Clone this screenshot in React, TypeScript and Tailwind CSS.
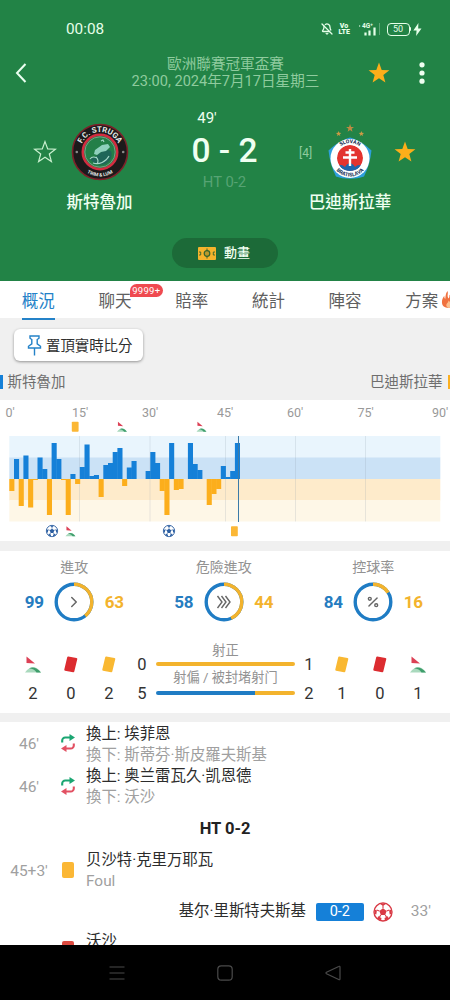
import type { ReactNode } from 'react';
import { BellOff, ChevronRight, Percent } from 'lucide-react';

const BLUE = '#1580d8';
const AMBER = '#fcae1c';

const TABS = [
  { label: '概況', active: true },
  { label: '聊天', badge: '9999+' },
  { label: '賠率' },
  { label: '統計' },
  { label: '陣容' },
  { label: '方案', hot: true },
];

// one value per minute, positive = home pressure, negative = away pressure
const MOMENTUM = [
  -12, 20, -27, 23.5, -28.5, -1, 21.5, 10, -36, 36, 20, -1, -36, 5, -5, 12, 34.5, 3, 4, -18, 14, 16, 27, 31, -7, 11.5,
  18, 0, 0, 8, 27, 16, -12, -36, 36, -11, -10, 0, 36, 15, 9, 0, -26, -15, -10, 13, 2, 8, 36,
];

const STAR = 'M12 1.6l2.7 7.3 7.7.3-6.1 4.8 2.1 7.5-6.4-4.3-6.4 4.3 2.1-7.5-6.1-4.8 7.7-.3z';

const Star = ({ filled = false, className = '' }: { filled?: boolean; className?: string }) => (
  <svg viewBox="0 0 24 24" className={className}>
    <path d={STAR} fill={filled ? '#fcae1a' : 'none'} stroke={filled ? 'none' : '#c9f0cf'} strokeWidth="1.2" />
  </svg>
);

const Ball = ({ color = '#2a5da0' }: { color?: string }) => (
  <g>
    <circle cx="10" cy="10" r="9" fill="#fff" stroke={color} strokeWidth="1.4" />
    <path d="M10 6.3l3.6 2.6-1.4 4.2H7.8L6.4 8.9z" fill={color} />
    <path d="M10 6.3V3.5M13.6 8.9l2.8-.9M12.2 13.1l1.7 2.4M7.8 13.1l-1.7 2.4M6.4 8.9L3.6 8" stroke={color} strokeWidth="1.1" />
    <path d="M6.8 1.8L10 4l3.2-2.2zM18.7 7.2l-2.6 1.2.6 4.2 1.5-.7zM15.8 16.8l-.9-2.6-3.4 1.9.5 2.5zM4.2 16.8l.9-2.6 3.4 1.9-.5 2.5zM1.3 7.2l2.6 1.2-.6 4.2-1.5-.7z" fill={color} />
  </g>
);

const Corner = () => (
  <g>
    <path d="M1.5.5L10 7.5 1.5 7z" fill="#dc4055" />
    <path d="M0 16.5C3 12.5 6 11 9 11.3s5 2.5 7 5.2z" fill="#a9d9bd" />
    <path d="M4 12.3c4-2 8-.5 12 4.2h-4.5c-1.5-2.5-4-4-7.5-4.2z" fill="#3f9e6c" />
  </g>
);

const StatusBar = () => (
  <div className="flex h-[58px] items-center pl-[66px] pr-[28px] text-[#e6ffe9]">
    <span className="flex-1 text-[15.3px] leading-5">00:08</span>
    <BellOff className="h-3 w-3" strokeWidth={2.6} />
    <span className="ml-[6px] flex w-[11px] flex-col text-center text-[7px] font-black leading-[6.5px]">
      <span>Vo</span>
      <span>LTE</span>
    </span>
    <svg viewBox="0 0 22 14" className="ml-[9px] h-[14px] w-[22px]">
      <rect x="0" y="3" width="1.2" height="2" fill="#8fc7a0" />
      <text x="3" y="5.5" fontSize="6.5" fontWeight="700" fill="currentColor">4G⁺</text>
      <path d="M6.5 13.5v-3M10.5 13.5v-5M15.5 13.5V5.5" stroke="currentColor" strokeWidth="2.2" />
      <path d="M20.5 1v12" stroke="#5da677" strokeWidth="1" />
    </svg>
    <div className="ml-[6px] flex h-[13px] w-[23px] items-center justify-center rounded-[4px] border-[1.5px] border-current text-[9px] leading-none">
      50
    </div>
    <span className="h-1 w-[1.5px] rounded-r bg-current" />
    <svg viewBox="0 0 9 14" className="ml-[2px] h-[13px] w-[9px]">
      <path d="M5.5 0L0 8h3.5L3 14l5.8-8.2H5.2z" fill="currentColor" />
    </svg>
  </div>
);

const HomeCrest = () => (
  <svg viewBox="0 0 58 58" className="h-[58px] w-[58px]">
    <defs>
      <path id="home-top" d="M9 29a20 20 0 0 1 40 0" />
      <path id="home-bottom" d="M4.5 29a24.5 24.5 0 0 0 49 0" />
    </defs>
    <circle cx="29" cy="29" r="27.5" fill="#1c1a1b" stroke="#7d2029" strokeWidth="1.6" />
    <circle cx="29" cy="29" r="17.2" fill="#237f48" stroke="#d32c40" strokeWidth="2.6" />
    <circle cx="29" cy="29" r="15.2" fill="none" stroke="#8aa894" strokeWidth="0.8" />
    <path d="M18 34c4 2 8-1 11-4s7-4 11-2c2 5-1 11-6 13-7 2-13-1-16-7z" fill="#1f6659" />
    <path d="M24 27l7-5 6-1 2 3-4 4-5 1-4 3-3-1z" fill="#8fd0bd" />
    <path d="M19 36c2-3 5-2 7-1M22 40c6 2 13-1 16-7M26 41c2-3 1-5-1-7M30 18l2-1 1 2" stroke="#a5d8c8" strokeWidth="1.1" fill="none" />
    <text fontSize="7.8" fontWeight="700" fill="#e8ece9" textAnchor="middle">
      <textPath href="#home-top" startOffset="50%">F.C. STRUGA</textPath>
    </text>
    <text fontSize="4.8" fontWeight="700" fill="#e8ece9" textAnchor="middle">
      <textPath href="#home-bottom" startOffset="50%">TRIM &amp; LUM</textPath>
    </text>
    <circle cx="5.8" cy="29" r="1.3" fill="#8b8b8b" />
    <circle cx="52.2" cy="29" r="1.3" fill="#8b8b8b" />
  </svg>
);

const AwayCrest = () => (
  <svg viewBox="0 0 46 58" className="h-[58px] w-[46px]">
    <defs>
      <path id="away-top" d="M8 35a15 15 0 0 1 30 0" />
      <path id="away-bottom" d="M4.5 35a18.5 18.5 0 0 0 37 0" />
      <clipPath id="away-inner">
        <circle cx="23" cy="35" r="13" />
      </clipPath>
    </defs>
    <path d={STAR} transform="translate(18.5 .5) scale(.38)" fill="#bd8a43" />
    <path d={STAR} transform="translate(8.5 7.5) scale(.26)" fill="#cb9a45" />
    <path d={STAR} transform="translate(31.3 7.5) scale(.26)" fill="#cb9a45" />
    <path d="M23 14.5c7 2 14 6 21.5 13-1 9-3 17-7.5 26-9 3-19 3-28 0-4.500-9-6.500-17-7.500-26C9 20.500 16 16.500 23 14.500z" fill="#2f9fdc" />
    <circle cx="23" cy="35.5" r="19.5" fill="#fff" />
    <g clipPath="url(#away-inner)">
      <circle cx="23" cy="35" r="13" fill="#e3332f" />
      <path d="M8 46c4-5 7-5 10-2 3-5 7-5 10 0 3-3 6-3 10 2v8H8z" fill="#1d66ad" />
    </g>
    <path d="M23 26v17M18.5 29.5h9M16 34.5h14" stroke="#fff" strokeWidth="2.4" />
    <text fontSize="5.2" fontWeight="800" fill="#1c3558" textAnchor="middle">
      <textPath href="#away-top" startOffset="50%">SLOVAN</textPath>
    </text>
    <text fontSize="5.2" fontWeight="800" fill="#1c3558" textAnchor="middle">
      <textPath href="#away-bottom" startOffset="50%">BRATISLAVA</textPath>
    </text>
  </svg>
);

const MatchHeader = () => (
  <header className="h-[281px] shrink-0 bg-[#228346]">
    <StatusBar />
    <div className="flex h-[30px] items-center pl-[15px] pr-[25px]">
      <svg viewBox="0 0 12 20" className="h-5 w-3 shrink-0" fill="none" stroke="#eafff0" strokeWidth="2">
        <path d="M10.5 1L2 10l8.5 9" />
      </svg>
      <div className="flex flex-1 flex-col items-center pl-[63px] text-[14.6px] leading-[17px] text-[#8fcb9e]">
        <span>歐洲聯賽冠軍盃賽</span>
        <span className="whitespace-nowrap">23:00, 2024年7月17日星期三</span>
      </div>
      <Star filled className="ml-[6px] h-6 w-6 shrink-0" />
      <svg viewBox="0 0 6 22" className="ml-[28px] h-[22px] w-[6px] shrink-0 fill-[#effff1]">
        <circle cx="3" cy="2.8" r="2.6" />
        <circle cx="3" cy="11" r="2.6" />
        <circle cx="3" cy="19.2" r="2.6" />
      </svg>
    </div>
    <div className="flex h-[126px] pl-[33px] pt-[20px]">
      <Star className="mt-[32px] h-6 w-6 shrink-0" />
      <div className="flex w-[85px] flex-col items-center pt-[15px] text-[16.5px] font-medium text-[#effff1]">
        <HomeCrest />
        <span className="mt-[12px] leading-5">斯特魯加</span>
      </div>
      <div className="flex w-[157px] flex-col items-center pl-2 text-[#effff1]">
        <span className="mr-[35px] text-[15px] leading-5">49'</span>
        <span className="mt-[3px] whitespace-nowrap text-[33.5px] font-medium leading-10">0 - 2</span>
        <span className="mt-[1px] text-[14.8px] leading-5 text-[#57a374]">HT 0-2</span>
      </div>
      <span className="mt-[35px] w-[14px] text-[12px] leading-5 text-[#8fcb9e]">[4]</span>
      <div className="-ml-[6px] flex w-[86px] flex-col items-center pt-[15px] text-[16.5px] font-medium text-[#effff1]">
        <AwayCrest />
        <span className="mt-[12px] whitespace-nowrap leading-5">巴迪斯拉華</span>
      </div>
      <Star filled className="mt-[32px] h-6 w-6 shrink-0" />
    </div>
    <button className="ml-[172px] mt-[24px] flex h-[30px] w-[106px] items-center justify-center gap-2 rounded-full bg-[#1c6a38] pr-[2px] text-[13px] font-medium text-[#effff1]">
      <svg viewBox="0 0 18 13" className="h-[13px] w-[18px]">
        <rect width="18" height="13" rx="1" fill="#f5b32c" />
        <path d="M9 1.500v10" stroke="#33642e" strokeWidth="1" />
        <path d="M1 5h1.700v3H1M17 5h-1.700v3H17" stroke="#33642e" strokeWidth="0.9" fill="none" />
        <circle cx="9" cy="6.5" r="2.8" fill="#b99a2c" stroke="#33642e" strokeWidth="1.2" />
      </svg>
      動畫
    </button>
  </header>
);

const TabBar = () => (
  <nav className="relative z-10 flex h-[37px] shrink-0 bg-white text-[16.5px] text-[#606060]">
    {TABS.map((tab) => (
      <div key={tab.label} className="relative flex w-[76.7px] shrink-0 justify-center pt-[9px] leading-6">
        <span className={tab.active ? 'h-[30px] border-b-2 border-[#2482c8] text-[#2482c8]' : ''}>{tab.label}</span>
        {tab.badge && (
          <span className="absolute left-[53px] top-[3px] rounded-full rounded-bl-none bg-[#ef4a50] px-[2.5px] text-[9.5px] leading-[13px] tracking-[0.3px] text-white">
            {tab.badge}
          </span>
        )}
        {tab.hot && (
          <svg viewBox="0 0 16 18" className="absolute left-[58px] top-[10px] h-[17px] w-[15px]">
            <path d="M7 0c1 3-1 5 1 8 1-1 1-2 1-4 4 3 6 6 5 9s-3 5-6 5c-4 0-7-2-7-6 0-3 1-5 2.500-7 0 2 .5 3 1 3.500C5 6 4.500 3 7 0z" fill="#f0713f" />
            <path d="M8 18c-2.500-1-3-3-1.500-5 1-1 1.500-2 1.500-3 2 2 4 4 3 6s-2 2-3 2z" fill="#fbc08e" />
          </svg>
        )}
      </div>
    ))}
  </nav>
);

const Teams = () => (
  <div className="h-[82px] shrink-0 bg-[#f0f0f0] pt-[11px]">
    <button className="ml-[14px] flex h-[32px] w-[129px] items-center gap-1 rounded-[6px] bg-white pl-[13px] text-[14.4px] text-[#2f2f2f] shadow-[0_1px_3px_rgba(0,0,0,0.4)]">
      <svg viewBox="0 0 15 21" className="h-[21px] w-[15px] shrink-0" fill="none" stroke="#2482c8" strokeWidth="1.4">
        <path d="M3 1h9v2.200l-1.800 1.300v4.300l3.300 2.500v1.700h-12v-1.700l3.300-2.500V4.500L3 3.200zM7.500 13v7.500" />
      </svg>
      <span className="whitespace-nowrap pt-[3px]">置頂實時比分</span>
    </button>
    <div className="mt-[12px] flex h-5 items-center justify-between text-[14.5px] leading-5 text-[#6e6e6e]">
      <span className="flex items-center gap-[5px]">
        <i className="mb-[2px] h-[14px] w-[2.5px] bg-[#1580d8]" />
        斯特魯加
      </span>
      <span className="flex items-center gap-[5px]">
        巴迪斯拉華
        <i className="mb-[2px] h-[14px] w-[2.5px] bg-[#fbb022]" />
      </span>
    </div>
  </div>
);

const Momentum = () => (
  <svg viewBox="0 0 450 141" className="h-[141px] w-[450px] shrink-0 bg-white">
    {[
      [10, "0'"],
      [80, "15'"],
      [150, "30'"],
      [225, "45'"],
      [295, "60'"],
      [365.5, "75'"],
      [440, "90'"],
    ].map(([x, label]) => (
      <text key={label} x={x} y="17" textAnchor="middle" fontSize="12.5" fill="#999">
        {label}
      </text>
    ))}
    <rect x="9.3" y="36" width="431" height="22" fill="#e9f5fd" />
    <rect x="9.3" y="57.5" width="431" height="21.5" fill="#cbe2f6" />
    <rect x="9.3" y="79" width="431" height="21.5" fill="#feebcb" />
    <rect x="9.3" y="100" width="431" height="21.5" fill="#fef7e7" />
    {[79.5, 150, 225.5, 295.5, 365.5].map((x) => (
      <path key={x} d={`M${x} 36v85.5`} stroke="#8d9aa8" strokeOpacity="0.25" strokeWidth="0.8" />
    ))}
    {MOMENTUM.map((v, i) => (
      <rect key={i} x={9.3 + i * 4.7} y={v > 0 ? 79 - v : 79} width="5.1" height={Math.abs(v)} fill={v > 0 ? BLUE : AMBER} />
    ))}
    <path d="M238.5 36v86" stroke="#3c7ba8" strokeWidth="1" />
    <rect x="71.8" y="21.8" width="6.8" height="10" rx=".8" fill="#fbb735" />
    <rect x="231" y="126.3" width="6.8" height="10" rx=".8" fill="#fbb735" />
    {[
      [117, 21.5],
      [196.5, 21.5],
      [65.5, 126],
    ].map(([x, y]) => (
      <g key={x} transform={`translate(${x} ${y}) scale(.62)`}>
        <Corner />
      </g>
    ))}
    {[45.7, 162.7].map((x) => (
      <g key={x} transform={`translate(${x} 124.7) scale(.63)`}>
        <Ball />
      </g>
    ))}
  </svg>
);

const Donut = ({ label, home, away, icon }: { label: string; home: number; away: number; icon: ReactNode }) => {
  const circumference = 2 * Math.PI * 17.8;
  const share = (away / (home + away)) * circumference;
  return (
    <div className="flex w-[149.5px] flex-col items-center">
      <span className="text-[14px] leading-5 text-[#929292]">{label}</span>
      <div className="mt-[5px] flex items-center text-[17px] font-bold tracking-[-0.3px]">
        <span className="w-10 pt-[1px] text-center text-[#257cc0]">{home}</span>
        <div className="relative flex h-10 w-10 items-center justify-center text-[#666]">
          <svg viewBox="0 0 40 40" className="absolute inset-0 -rotate-90" fill="none" strokeWidth="3.4">
            <circle cx="20" cy="20" r="17.8" stroke="#1f7cc4" />
            <circle cx="20" cy="20" r="17.8" stroke="#f3b32d" strokeDasharray={`${share} ${circumference}`} />
          </svg>
          {icon}
        </div>
        <span className="w-10 pt-[1px] text-center text-[#f3b32d]">{away}</span>
      </div>
    </div>
  );
};

const Card = ({ color }: { color: string }) => (
  <svg viewBox="0 0 14 17" className="h-[17px] w-[14px]">
    <path d="M4.3.6l8.2 1.300a1 1 0 0 1 .8 1.200l-3 12.500a1 1 0 0 1-1.200.7L1 14.700a1 1 0 0 1-.7-1.200L3.200 1.300A1 1 0 0 1 4.300.6z" fill={color} />
  </svg>
);

const StatIcon = ({ value, children }: { value: number; children: ReactNode }) => (
  <div className="flex w-[38px] flex-col items-center">
    <div className="flex h-[17px] items-center">{children}</div>
    <span className="mt-[11px] leading-5">{value}</span>
  </div>
);

const CornerStat = () => (
  <svg viewBox="0 0 16 17" className="h-[17px] w-4">
    <Corner />
  </svg>
);

const Stats = () => (
  <section className="h-[162px] shrink-0 bg-white pt-[6px]">
    <div className="-ml-[0.5px] flex">
      <Donut label="進攻" home={99} away={63} icon={<ChevronRight className="h-[18px] w-[18px]" strokeWidth={2} />} />
      <Donut
        label="危險進攻"
        home={58}
        away={44}
        icon={
          <svg viewBox="0 0 16 14" className="h-[14px] w-4" fill="none" stroke="currentColor" strokeWidth="1.4">
            <path d="M1.500 1L6 7l-4.500 6M5.500 1L10 7l-4.500 6M9.500 1L14 7l-4.500 6" />
          </svg>
        }
      />
      <Donut label="控球率" home={84} away={16} icon={<Percent className="h-[14px] w-[14px]" strokeWidth={2.4} />} />
    </div>
    <div className="flex pl-[14px] pt-[19px] text-[16.5px] text-[#333]">
      <div className="flex pt-[15px]">
        <StatIcon value={2}><CornerStat /></StatIcon>
        <StatIcon value={0}><Card color="#dc2c30" /></StatIcon>
        <StatIcon value={2}><Card color="#f9b832" /></StatIcon>
      </div>
      <div className="flex w-7 flex-col items-center gap-[9px] pt-[14px] leading-5">
        <span>0</span>
        <span>5</span>
      </div>
      <div className="flex w-[139px] flex-col items-center text-[13.2px] leading-5 text-[#929292]">
        <span className="h-[21px]">射正</span>
        <i className="h-1 w-full rounded-full bg-[#f3b32d]" />
        <span className="mt-[2px] h-[23px] whitespace-nowrap">射偏 / 被封堵射门</span>
        <div className="flex h-1 w-full overflow-hidden rounded-full">
          <i className="w-[71.4%] bg-[#1f7cc4]" />
          <i className="flex-1 bg-[#f3b32d]" />
        </div>
      </div>
      <div className="flex w-7 flex-col items-center gap-[9px] pt-[14px] leading-5">
        <span>1</span>
        <span>2</span>
      </div>
      <div className="flex pt-[15px]">
        <StatIcon value={1}><Card color="#f9b832" /></StatIcon>
        <StatIcon value={0}><Card color="#dc2c30" /></StatIcon>
        <StatIcon value={1}><CornerStat /></StatIcon>
      </div>
    </div>
  </section>
);

const SwapIcon = () => (
  <svg viewBox="0 0 16 20" className="mb-[3px] h-5 w-4" fill="none" strokeWidth="2.1">
    <path d="M2.200 9.500V7.500a3 3 0 0 1 3-3H10" stroke="#1ba672" />
    <path d="M9.500 1l5.500 3.500-5.500 3.500z" fill="#1ba672" />
    <path d="M13.800 10.500v2a3 3 0 0 1-3 3H6" stroke="#e25062" />
    <path d="M6.500 12L1 15.500 6.500 19z" fill="#e25062" />
  </svg>
);

const EventRow = ({ time, icon, title, note }: { time: string; icon: ReactNode; title: string; note?: string }) => (
  <div className="flex items-center">
    <span className="w-[58px] shrink-0 text-center text-[15.5px] text-[#a0a0a0]">{time}</span>
    <span className="flex w-[19px] shrink-0 justify-center">{icon}</span>
    <div className="ml-[9px] flex flex-col whitespace-nowrap text-[15.4px] leading-[21.3px]">
      <span className="text-[#2c2c2c]">{title}</span>
      {note && <span className="text-[#a0a0a0]">{note}</span>}
    </div>
  </div>
);

const Events = () => (
  <section className="h-[223px] shrink-0 overflow-hidden bg-white pt-[1.5px]">
    <EventRow time="46'" icon={<SwapIcon />} title="換上: 埃菲恩" note="換下: 斯蒂芬·斯皮羅夫斯基" />
    <EventRow time="46'" icon={<SwapIcon />} title="換上: 奥兰雷瓦久·凯恩德" note="換下: 沃沙" />
    <p className="flex h-[41.5px] items-center justify-center text-[16.5px] font-bold text-[#222]">HT 0-2</p>
    <EventRow
      time="45+3'"
      icon={<i className="mb-[2px] h-4 w-3 rounded-[2px] bg-[#fbb735]" />}
      title="贝沙特·克里万耶瓦"
      note="Foul"
    />
    <div className="flex h-[38px] items-center justify-end pr-[19px] text-[15.4px] text-[#2c2c2c]">
      <span>基尔·里斯特夫斯基</span>
      <span className="ml-[10px] flex h-[18px] w-12 items-center justify-center rounded-[2px] bg-[#1580d8] text-[14.5px] text-white">
        0-2
      </span>
      <svg viewBox="0 0 20 20" className="ml-[9px] h-5 w-5">
        <Ball color="#d93a45" />
      </svg>
      <span className="ml-[18px] text-[15.5px] text-[#a0a0a0]">33'</span>
    </div>
    <EventRow time="" icon={<i className="-mb-[20px] h-4 w-3 rounded-[2px] bg-[#dc4a40]" />} title="沃沙" />
  </section>
);

const SystemNav = () => (
  <footer className="flex h-[55px] shrink-0 items-center justify-between bg-black px-[109px] text-[#4a4a4a]">
    <svg viewBox="0 0 16 16" className="h-4 w-4" stroke="currentColor" strokeWidth="1.2">
      <path d="M.5 2h15M.5 8h15M.5 14h15" />
    </svg>
    <svg viewBox="0 0 16 16" className="h-4 w-4" fill="none" stroke="currentColor" strokeWidth="1.2">
      <rect x=".8" y=".8" width="14.4" height="14.4" rx="3.5" />
    </svg>
    <svg viewBox="0 0 16 16" className="h-4 w-4" fill="none" stroke="currentColor" strokeWidth="1.2">
      <path d="M15 2.200v11.600q0 1.400-1.300.7L1.500 8.700q-1-.7 0-1.400L13.700 1.500q1.300-.7 1.300.7z" />
    </svg>
  </footer>
);

export default function App() {
  return (
    <div className="flex h-[1000px] w-[450px] flex-col overflow-hidden bg-[#f0f0f0] font-[Roboto,'Noto_Sans_CJK_TC',sans-serif]">
      <MatchHeader />
      <TabBar />
      <Teams />
      <Momentum />
      <div className="h-[10px] shrink-0" />
      <Stats />
      <div className="h-[9px] shrink-0" />
      <Events />
      <SystemNav />
    </div>
  );
}
